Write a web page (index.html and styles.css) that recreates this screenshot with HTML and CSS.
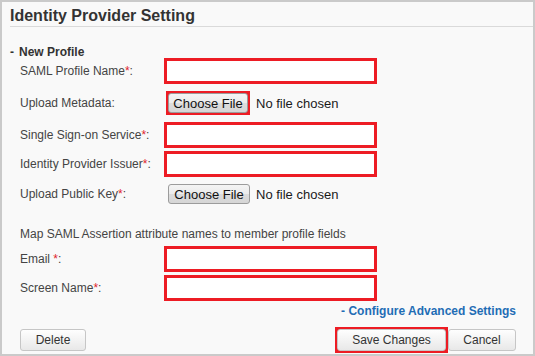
FILE: index.html
```html
<!DOCTYPE html>
<html lang="en">
<head>
    <meta charset="UTF-8">
    <meta name="viewport" content="width=device-width, initial-scale=1.0">
    <title>Identity Provider Setting</title>
    <link rel="stylesheet" href="styles.css">
</head>
<body>
    <div class="panel">
        <h2 class="panel-title">Identity Provider Setting</h2>

        <div class="section-title"><span class="toggle">-</span>New Profile</div>

        <div class="fields">
            <div class="field">
                <label>SAML Profile Name<span class="req">*</span>:</label>
                <input type="text" class="hl">
            </div>
            <div class="field file-row spaced">
                <label>Upload Metadata:</label>
                <div class="file">
                    <span class="mark mark-file"><button type="button" class="file-btn">Choose File</button></span>
                    <span class="file-name">No file chosen</span>
                </div>
            </div>
            <div class="field spaced">
                <label>Single Sign-on Service<span class="req">*</span>:</label>
                <input type="text" class="hl">
            </div>
            <div class="field">
                <label>Identity Provider Issuer<span class="req">*</span>:</label>
                <input type="text" class="hl">
            </div>
            <div class="field key-row spaced">
                <label>Upload Public Key<span class="req">*</span>:</label>
                <div class="file">
                    <button type="button" class="file-btn">Choose File</button>
                    <span class="file-name">No file chosen</span>
                </div>
            </div>

            <p class="map-note">Map SAML Assertion attribute names to member profile fields</p>

            <div class="field">
                <label>Email <span class="req">*</span>:</label>
                <input type="text" class="hl">
            </div>
            <div class="field">
                <label>Screen Name<span class="req">*</span>:</label>
                <input type="text" class="hl">
            </div>
        </div>

        <div class="advanced">
            <a href="#" class="advanced-link">- Configure Advanced Settings</a>
        </div>

        <div class="actions">
            <button type="button" class="btn">Delete</button>
            <div class="actions-right">
                <span class="mark"><button type="button" class="btn btn-save">Save Changes</button></span>
                <button type="button" class="btn btn-cancel">Cancel</button>
            </div>
        </div>
    </div>
</body>
</html>
```

FILE: styles.css
```css
body {
    margin: 0;
    font-family: "Liberation Sans", Arial, sans-serif;
    font-size: 12px;
    color: #444;
}
.panel {
    box-sizing: border-box;
    width: 535px;
    height: 356px;
    border: 2px solid #cacaca;
    background-color: #f9f9f9;
}
.panel-title {
    margin: 0 0 0 8px;
    padding-top: 4px;
    font-size: 16px;
    line-height: 20px;
    font-weight: bold;
    color: #333;
    border-bottom: 1px solid #dadada;
}
.section-title {
    margin: 19px 0 0 8px;
    line-height: 12px;
    font-weight: bold;
    color: #333;
}
.toggle {
    display: inline-block;
    width: 9px;
}
.fields {
    padding-left: 18px;
}
.field {
    display: grid;
    grid-template-columns: 144px 1fr;
    align-items: center;
    height: 26px;
    margin-top: 3px;
}
.fields > .field:first-child {
    margin-top: 0;
}
.field.spaced {
    margin-top: 7px;
}
.field.file-row {
    height: 24px;
}
.field.key-row {
    height: 20px;
}
.field label {
    line-height: 14px;
}
.req {
    color: #e0242c;
}
.field input {
    box-sizing: border-box;
    width: 213px;
    height: 26px;
    margin: 0;
    border: 1px solid #ccc;
    background-color: #fff;
}
input.hl {
    outline: 3px solid #ed1c24;
    outline-offset: -3px;
}

/* red highlight frame round a button */
.mark {
    display: inline-flex;
    border: 3px solid #ed1c24;
}
.mark > button {
    margin: -1px;
}
.mark-file {
    margin: 0 6px 0 2px;
}
.mark-file > .file-btn {
    width: 80px;
}

.file {
    display: flex;
    align-items: center;
}
.file-btn {
    box-sizing: border-box;
    width: 82px;
    height: 20px;
    margin: 0 6px 0 4px;
    padding: 0;
    font-family: "Liberation Sans", Arial, sans-serif;
    font-size: 13px;
    color: #111;
    background: linear-gradient(#f4f4f4 0%, #ebebeb 50%, #dcdcdc 51%, #d6d6d6 100%);
    border: 1px solid #9c9c9c;
    border-radius: 3px;
}
.file-name {
    font-size: 13px;
    color: #1a1a1a;
}
.map-note {
    margin: 23px 0 5px;
    line-height: 14px;
}
.advanced {
    margin-top: 3px;
    padding-right: 17px;
    text-align: right;
    line-height: 14px;
}
.advanced-link {
    font-weight: bold;
    color: #1f6db5;
    text-decoration: none;
}
.actions {
    display: flex;
    justify-content: space-between;
    align-items: center;
    margin-top: 9px;
    padding: 0 17px 0 18px;
}
.actions-right {
    display: flex;
    align-items: center;
}
.btn {
    box-sizing: border-box;
    width: 66px;
    height: 22px;
    padding: 0;
    font-family: "Liberation Sans", Arial, sans-serif;
    font-size: 12px;
    color: #333;
    background: linear-gradient(#fefefe, #e8e8e8);
    border: 1px solid #c6c6c6;
    border-radius: 3px;
}
.btn-save {
    width: 109px;
}
.btn-cancel {
    width: 68px;
}
```
